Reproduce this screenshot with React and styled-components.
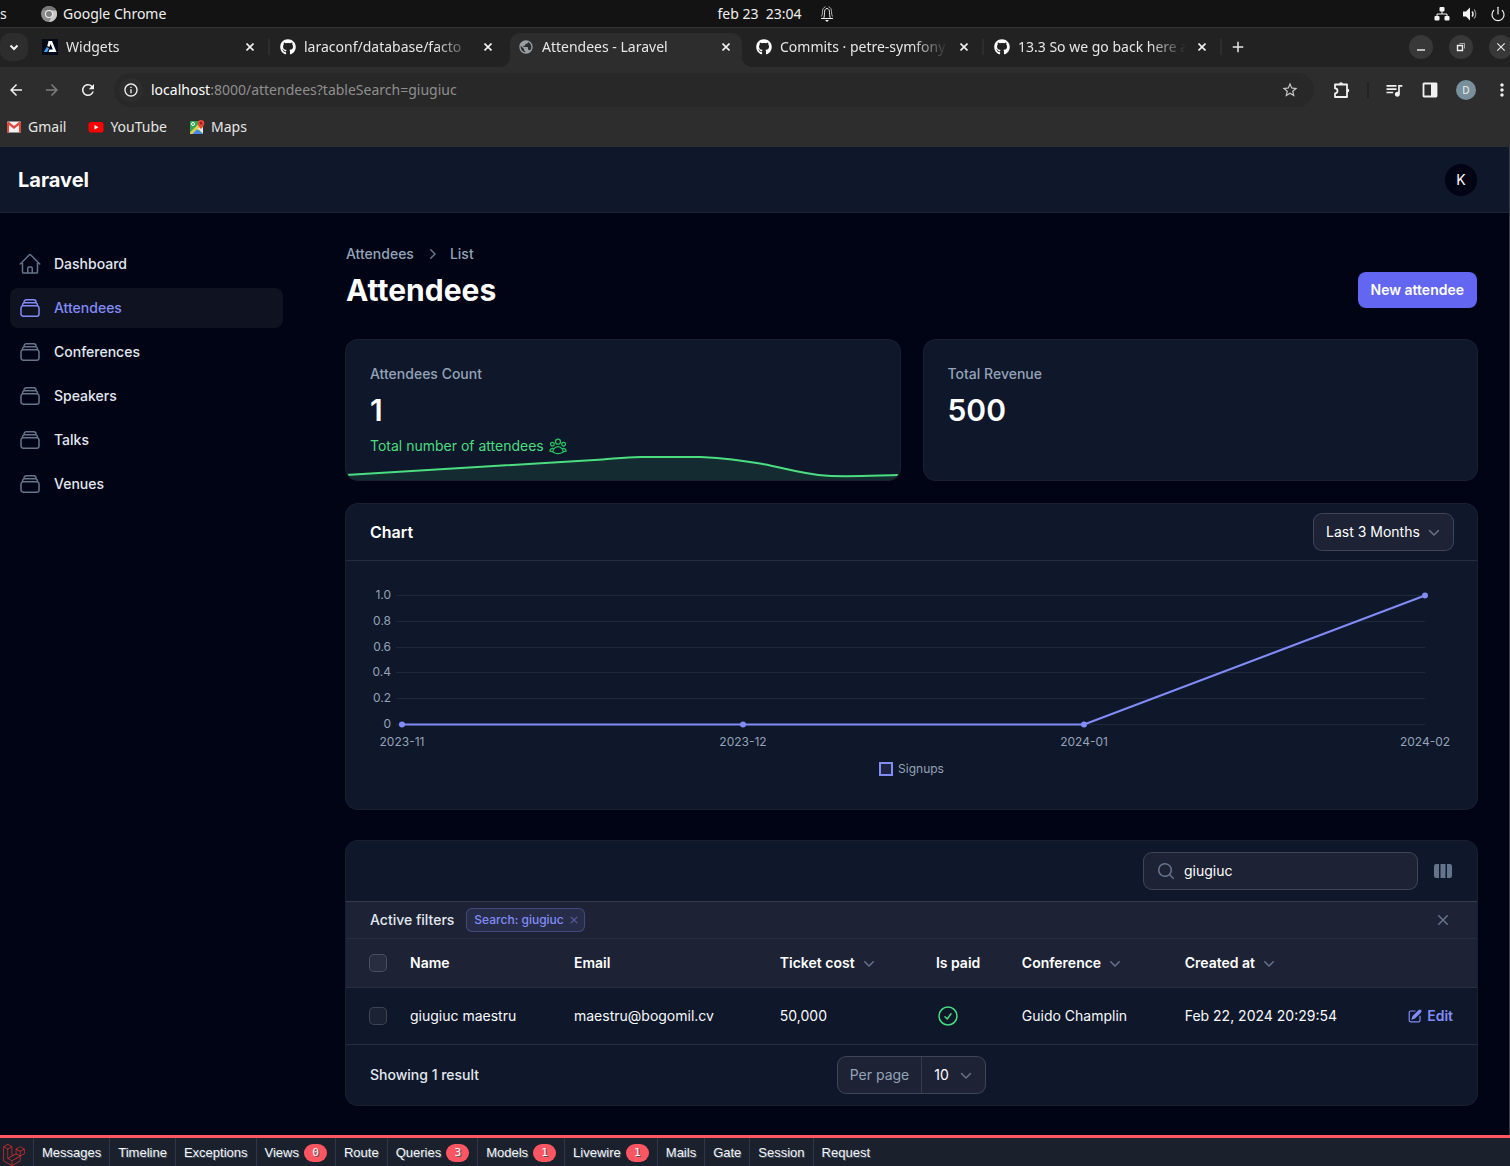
import React from "react";
import styled, { createGlobalStyle, css } from "styled-components";
import {
  HiOutlineHome,
  HiOutlineRectangleStack,
  HiOutlineUserGroup,
  HiOutlineCheckCircle,
  HiMiniChevronRight,
  HiMiniChevronDown,
  HiMiniXMark,
  HiMiniViewColumns,
  HiMiniPencilSquare,
  HiMiniMagnifyingGlass,
} from "react-icons/hi2";
import {
  MdArrowBack,
  MdArrowForward,
  MdRefresh,
  MdInfoOutline,
  MdStarBorder,
  MdQueueMusic,
  MdMoreVert,
  MdPublic,
  MdClose,
  MdAdd,
} from "react-icons/md";
import { FaGithub } from "react-icons/fa";
import { SiLaravel } from "react-icons/si";
import { Power } from "lucide-react";

const color = {
  page: "#010415",
  surface: "#0f172a",
  raised: "#1d2335",
  ring: "rgba(255, 255, 255, 0.11)",
  ringStrong: "rgba(255, 255, 255, 0.2)",
  text: "#e2e8f0",
  muted: "#94a3b8",
  icon: "#64748b",
  primary: "#818cf8",
  green: "#4ade80",
  chrome: "#2d2d2d",
  chromeDark: "#222222",
  chromeText: "#e6e6e6",
  debug: "#ff5661",
};

const uiFont = `"Inter", "Liberation Sans", sans-serif`;
const shellFont = `"Noto Sans", "Open Sans", sans-serif`;

const GlobalStyle = createGlobalStyle`
  *, *::before, *::after { box-sizing: border-box; }
  body {
    margin: 0;
    background: ${color.page};
    font-family: ${uiFont};
    font-size: 14px;
    line-height: 20px;
    color: ${color.text};
  }
  button, input, select { font: inherit; color: inherit; }
  button { border: 0; padding: 0; background: none; cursor: pointer; }
  a { color: inherit; text-decoration: none; }
  h1, h2, p, ul, ol { margin: 0; padding: 0; list-style: none; font-weight: inherit; }
  svg { display: block; flex-shrink: 0; }
`;

const Window = styled.div`
  min-height: 100vh;
  display: flex;
  flex-direction: column;
  overflow-x: hidden;
`;

/* ---------- desktop bar ---------- */

const DesktopBar = styled.div`
  height: 28px;
  display: grid;
  grid-template-columns: 717fr auto 676fr;
  align-items: center;
  background: #131313;
  border-bottom: 1px solid #343434;
  color: #f0f0f0;
  font-family: ${shellFont};
  font-size: 14px;
  overflow: hidden;
  white-space: pre;
`;

const DesktopGroup = styled.div`
  display: flex;
  align-items: center;
  gap: ${(p) => p.$gap}px;
  justify-content: ${(p) => (p.$end ? "flex-end" : "flex-start")};
  padding-right: ${(p) => (p.$end ? 4 : 0)}px;
`;

const CutLabel = styled.span`
  width: 35px;
`;

/* ---------- browser ---------- */

const TabStrip = styled.div`
  height: 39px;
  display: flex;
  align-items: flex-start;
  padding-top: 5px;
  background: ${color.chromeDark};
  color: ${color.chromeText};
  font-family: ${shellFont};
  font-size: 14px;
`;

const TabSearch = styled.button`
  width: 28px;
  height: 28px;
  margin-right: 6px;
  display: grid;
  place-items: center;
  border-radius: 10px;
  background: ${color.chrome};
  flex-shrink: 0;
`;

const Tab = styled.div`
  position: relative;
  flex: 0 1 232px;
  min-width: 60px;
  height: 34px;
  margin-right: 6px;
  padding: 0 8px 6px;
  display: flex;
  align-items: center;
  gap: 8px;
  border-radius: 10px 10px 0 0;
  ${(p) =>
    p.$active &&
    css`
      background: ${color.chrome};
      &::before,
      &::after {
        content: "";
        position: absolute;
        bottom: 0;
        width: 10px;
        height: 10px;
      }
      &::before {
        left: -10px;
        background: radial-gradient(circle at 0 0, transparent 10px, ${color.chrome} 10px);
      }
      &::after {
        right: -10px;
        background: radial-gradient(circle at 100% 0, transparent 10px, ${color.chrome} 10px);
      }
    `}
  ${(p) =>
    p.$divider &&
    css`
      &::after {
        content: "";
        position: absolute;
        right: -4px;
        top: 6px;
        width: 2px;
        height: 16px;
        background: ${color.chrome};
      }
    `}
`;

const TabTitle = styled.span`
  flex: 1;
  min-width: 0;
  overflow: hidden;
  white-space: nowrap;
  mask-image: linear-gradient(to right, #000 calc(100% - 36px), transparent);
`;

const TabClose = styled.button`
  width: 16px;
  height: 16px;
  display: grid;
  place-items: center;
  flex-shrink: 0;
`;

const NewTab = styled.button`
  width: 28px;
  height: 28px;
  display: grid;
  place-items: center;
`;

const WindowControls = styled.div`
  margin: 2px -3px 0 auto;
  display: flex;
  gap: 16px;
  flex-shrink: 0;
`;

const WindowControl = styled.button`
  width: 24px;
  height: 24px;
  border-radius: 50%;
  display: grid;
  place-items: center;
  background: #383838;
`;

const Toolbar = styled.div`
  height: 46px;
  display: flex;
  align-items: center;
  padding-left: 6px;
  background: ${color.chrome};
  color: #f1f1f1;
  font-family: ${shellFont};
  font-size: 14px;
`;

const ToolButton = styled.button`
  width: 20px;
  height: 20px;
  display: grid;
  place-items: center;
  flex-shrink: 0;
  color: ${(p) => (p.$dim ? "#7d7d7d" : "inherit")};
`;

const NavButtons = styled.div`
  display: flex;
  gap: 16px;
  margin-right: 16px;
`;

const AddressBar = styled.div`
  flex: 1;
  height: 34px;
  display: flex;
  align-items: center;
  gap: 8px;
  padding: 0 14px 0 5px;
  border-radius: 17px;
  background: #282828;
`;

const SiteInfo = styled.button`
  width: 24px;
  height: 24px;
  border-radius: 50%;
  display: grid;
  place-items: center;
  background: ${color.chrome};
`;

const Address = styled.div`
  flex: 1;
  color: #8f8f8f;
  white-space: nowrap;
  overflow: hidden;
  strong {
    font-weight: 400;
    color: #ffffff;
  }
`;

const ToolActions = styled.div`
  margin: 0 -2px 0 18px;
  display: flex;
  align-items: center;
  gap: 16px;
`;

const ToolDivider = styled.span`
  width: 2px;
  height: 16px;
  background: #232323;
  margin: 0 -1px;
`;

const Profile = styled.button`
  width: 20px;
  height: 20px;
  border-radius: 50%;
  background: #78909c;
  font-size: 10px;
  line-height: 20px;
`;

const Bookmarks = styled.nav`
  height: 34px;
  display: flex;
  gap: 22px;
  padding: 4px 6px 0;
  background: ${color.chrome};
  color: ${color.chromeText};
  font-family: ${shellFont};
  font-size: 14px;
  a {
    display: flex;
    align-items: center;
    gap: 6px;
    height: 20px;
  }
`;

/* ---------- application shell ---------- */

const Site = styled.div`
  flex: 1;
  display: flex;
  flex-direction: column;
  border-right: 1px solid #3a3c42;
`;

const Topbar = styled.header`
  height: 66px;
  display: flex;
  align-items: center;
  justify-content: space-between;
  padding: 0 32px 0 18px;
  background: ${color.surface};
  border-bottom: 1px solid #1d2433;
`;

const Brand = styled.a`
  font-size: 20px;
  font-weight: 700;
  color: #ffffff;
`;

const UserButton = styled.button`
  width: 32px;
  height: 32px;
  border-radius: 50%;
  background: ${color.page};
  color: #ffffff;
`;

const Body = styled.div`
  flex: 1;
  display: grid;
  grid-template-columns: 314px minmax(0, 1fr);
`;

const Sidebar = styled.nav`
  padding: 31px 31px 0 10px;
  ul {
    display: flex;
    flex-direction: column;
    gap: 4px;
  }
`;

const NavLink = styled.a`
  display: flex;
  align-items: center;
  gap: 12px;
  padding: 8px;
  border-radius: 8px;
  font-weight: 500;
  color: ${(p) => (p.$active ? color.primary : color.text)};
  background: ${(p) => (p.$active ? "#0f1221" : "transparent")};
  svg {
    width: 24px;
    height: 24px;
    color: ${(p) => (p.$active ? color.primary : color.icon)};
  }
`;

const Main = styled.main`
  padding: 31px 32px 30px;
`;

const Breadcrumbs = styled.ol`
  display: flex;
  align-items: center;
  gap: 8px;
  font-weight: 500;
  color: ${color.muted};
  svg {
    color: ${color.icon};
  }
  li {
    display: flex;
    gap: 8px;
  }
`;

const PageHeader = styled.div`
  display: flex;
  align-items: center;
  justify-content: space-between;
  margin: 8px 0 32px;
`;

const PageTitle = styled.h1`
  font-size: 30px;
  line-height: 36px;
  font-weight: 700;
  color: #ffffff;
`;

const PrimaryButton = styled.button`
  padding: 8px 13px;
  border-radius: 8px;
  background: #6366f1;
  color: #ffffff;
  font-weight: 600;
`;

const Card = styled.section`
  border-radius: 12px;
  background: ${color.surface};
  box-shadow: 0 0 0 1px ${color.ring};
`;

/* ---------- stats ---------- */

const Stats = styled.div`
  display: grid;
  grid-template-columns: 1fr 1fr;
  gap: 24px;
  margin-bottom: 24px;
`;

const StatCard = styled(Card)`
  position: relative;
  overflow: hidden;
  padding: 24px;
  display: flex;
  flex-direction: column;
  gap: 8px;
`;

const StatLabel = styled.p`
  font-weight: 500;
  color: ${color.muted};
`;

const StatValue = styled.p`
  font-size: 30px;
  line-height: 36px;
  font-weight: 600;
  color: #ffffff;
`;

const StatNote = styled.p`
  display: flex;
  align-items: center;
  gap: 4px;
  color: ${color.green};
  svg {
    color: #22c55e;
  }
`;

const Sparkline = styled.svg`
  position: absolute;
  inset: auto 0 0;
  width: 100%;
  height: 24px;
`;

/* ---------- chart ---------- */

const ChartCard = styled(Card)`
  margin-bottom: 32px;
`;

const ChartHeader = styled.div`
  display: flex;
  align-items: center;
  justify-content: space-between;
  padding: 10px 24px;
  border-bottom: 1px solid #262d3e;
  h2 {
    font-size: 16px;
    line-height: 24px;
    font-weight: 600;
    color: #ffffff;
  }
`;

const SelectWrap = styled.span`
  position: relative;
  display: inline-flex;
  border-radius: 8px;
  background: ${(p) => (p.$plain ? "transparent" : color.raised)};
  box-shadow: ${(p) => (p.$plain ? "none" : `0 0 0 1px ${color.ringStrong}`)};
  select {
    appearance: none;
    border: 0;
    height: 36px;
    padding: 0 ${(p) => (p.$plain ? 36 : 33)}px 0 12px;
    background: transparent;
    color: #ffffff;
    outline: none;
  }
  svg {
    position: absolute;
    right: 9px;
    top: 8px;
    pointer-events: none;
    color: #6b7280;
  }
`;

const ChartBody = styled.div`
  padding: 24px;
`;

const Plot = styled.svg`
  width: calc(100% - 60px);
  margin-left: 32px;
  height: 176px;
  overflow: visible;
  font-size: 12px;
  fill: ${color.muted};
`;

const Legend = styled.p`
  display: flex;
  align-items: center;
  justify-content: center;
  gap: 5px;
  margin-top: -2px;
  height: 26px;
  padding-bottom: 6px;
  font-size: 12px;
  color: ${color.muted};
  &::before {
    content: "";
    width: 14px;
    height: 14px;
    border: 2px solid ${color.primary};
    background: #1d2340;
  }
`;

/* ---------- table ---------- */

const TableTools = styled.div`
  display: flex;
  align-items: center;
  justify-content: flex-end;
  gap: 16px;
  padding: 12px 24px;
  color: ${color.icon};
`;

const SearchBox = styled.label`
  display: flex;
  align-items: center;
  gap: 8px;
  width: 273px;
  height: 36px;
  padding: 0 12px;
  border-radius: 8px;
  background: ${color.raised};
  box-shadow: 0 0 0 1px ${color.ringStrong};
  input {
    flex: 1;
    min-width: 0;
    border: 0;
    padding: 0;
    outline: none;
    background: transparent;
    color: #ffffff;
  }
`;

const FilterBar = styled.div`
  display: flex;
  align-items: center;
  gap: 12px;
  padding: 6px 24px;
  background: ${color.raised};
  border-top: 1px solid #333a4a;
  font-weight: 500;
  > button {
    margin-left: auto;
    color: ${color.icon};
  }
`;

const Chip = styled.span`
  display: inline-flex;
  align-items: center;
  gap: 3px;
  height: 24px;
  padding: 0 4px 0 8px;
  border-radius: 6px;
  font-size: 12px;
  color: ${color.primary};
  background: rgba(129, 140, 248, 0.1);
  box-shadow: inset 0 0 0 1px rgba(129, 140, 248, 0.3);
  button {
    color: #5860a8;
  }
`;

const Table = styled.table`
  width: 100%;
  table-layout: fixed;
  border-collapse: separate;
  border-spacing: 0;
  text-align: left;
  white-space: nowrap;
  th,
  td {
    padding: 0 12px;
    border-top: 1px solid #262d3e;
  }
  th {
    height: 49px;
    font-weight: 600;
    color: #ffffff;
    background: ${color.raised};
  }
  td {
    height: 57px;
    color: #f8fafc;
  }
  th:first-child,
  td:first-child {
    padding-left: 24px;
  }
  th:last-child,
  td:last-child {
    padding: 0 24px 0 0;
  }
  td > svg {
    color: ${color.green};
  }
`;

const SortButton = styled.button`
  display: flex;
  align-items: center;
  gap: 4px;
  svg {
    color: ${color.icon};
  }
`;

const Checkbox = styled.input.attrs({ type: "checkbox" })`
  appearance: none;
  display: block;
  width: 16px;
  height: 16px;
  margin: 0;
  border-radius: 4px;
  background: rgba(255, 255, 255, 0.05);
  box-shadow: 0 0 0 1px ${color.ringStrong};
`;

const EditLink = styled.a`
  display: flex;
  align-items: center;
  justify-content: flex-end;
  gap: 4px;
  font-weight: 600;
  color: ${color.primary};
`;

const TableFooter = styled.div`
  display: grid;
  grid-template-columns: 1fr auto 1fr;
  align-items: center;
  padding: 12px 24px;
  border-top: 1px solid #262d3e;
  font-weight: 500;
`;

const PerPage = styled.label`
  display: flex;
  border-radius: 8px;
  background: ${color.raised};
  box-shadow: 0 0 0 1px ${color.ringStrong};
  font-weight: 400;
`;

const PerPageLabel = styled.span`
  padding: 8px 12px;
  border-right: 1px solid #363c4c;
  color: ${color.muted};
`;

/* ---------- debug bar ---------- */

const DebugBar = styled.nav`
  height: 31px;
  display: flex;
  border-top: 3px solid ${color.debug};
  background: #1b212c;
  overflow: hidden;
  font-family: "Liberation Sans", Arial, sans-serif;
  font-size: 13px;
`;

const DebugLogo = styled.a`
  width: 34px;
  padding: 6px 0 0 3px;
  border-right: 1px solid #2d3748;
  color: #d9302c;
`;

const DebugTab = styled.a`
  display: flex;
  align-items: center;
  gap: 5px;
  padding: 2px 8px 0;
  color: #f4f6f8;
  text-shadow: 1px 1px 0 #4a5568;
  border-right: ${(p) => (p.$last ? "0" : "1px solid #2d3748")};
`;

const DebugBadge = styled.span`
  min-width: 23px;
  height: 18px;
  border-radius: 9px;
  background: ${color.debug};
  color: #ffffff;
  font-family: "DejaVu Sans Mono", monospace;
  font-size: 11px;
  line-height: 17px;
  text-align: center;
`;

/* ---------- drawings ---------- */

const ChromeMark = () => (
  <svg width="16" height="16" viewBox="0 0 16 16">
    <circle cx="8" cy="8" r="8" fill="#8c8c8c" />
    <path d="M8 4.5h7.2A8 8 0 0 1 8 16l3-6z" fill="#c9c9c9" />
    <path d="M1.2 4A8 8 0 0 1 15 4.200L8 4.500z" fill="#777777" />
    <circle cx="8" cy="8" r="4" fill="#f2f2f2" />
    <circle cx="8" cy="8" r="3" fill="#808080" />
  </svg>
);

const BellMark = () => (
  <svg width="14" height="16" viewBox="0 0 14 16" fill="none" stroke="#f0f0f0">
    <path d="M1 12.500h12" />
    <path d="M3.500 12.500C4.300 11 4.500 9 4.500 6.500 4.500 4 5.500 2.500 7 2.500s2.500 1.500 2.500 4c0 2.500 0.200 4.500 1 6" />
    <path d="M1.500 10.500C2.300 9 2.500 7.500 2.500 5.500 2.500 3 3.500 1.300 5.500 0.800M12.500 10.500c-0.800-1.500-1-3-1-5 0-2.500-1-4.200-3-4.700" opacity="0.7" />
    <path d="M5 14h4l-2 2z" fill="#f0f0f0" stroke="none" />
  </svg>
);

const NetworkMark = () => (
  <svg width="16" height="14" viewBox="0 0 16 14" fill="#f4f4f4">
    <rect x="5.500" y="0" width="5" height="4.500" rx="1" />
    <rect x="0.500" y="9" width="5" height="4.500" rx="1" />
    <rect x="10.500" y="9" width="5" height="4.500" rx="1" />
    <path d="M8 4v3M3 9.500V7h10v2.500" fill="none" stroke="#f4f4f4" />
  </svg>
);

const VolumeMark = () => (
  <svg width="16" height="16" viewBox="0 0 16 16">
    <path d="M1 5.500h3L8 1.500v13l-4-4H1z" fill="#f4f4f4" />
    <path d="M10 5.500a3.500 3.500 0 0 1 0 5" fill="none" stroke="#f4f4f4" strokeWidth="1.500" />
    <path d="M12 3.500a6.500 6.500 0 0 1 0 9" fill="none" stroke="#8a8a8a" strokeWidth="1.200" />
  </svg>
);

const FilamentMark = () => (
  <svg width="16" height="16" viewBox="0 0 16 16">
    <rect width="16" height="16" fill="#050a18" />
    <path d="M6.500 2h3.500l4.500 11H6.500l1-2.400h3.300L8.600 5 7.300 8 5.300 7z" fill="#ffffff" />
    <path d="M4.800 8l2.200 1.200L5.200 13H1.800z" fill="#3fa2f7" />
  </svg>
);

const CaretMark = () => (
  <svg width="12" height="12" viewBox="0 0 12 12" fill="none" stroke="#f1f1f1" strokeWidth="2">
    <path d="M2.500 4.500L6 8l3.500-3.500" />
  </svg>
);

const CrossMark = () => (
  <svg width="8" height="8" viewBox="0 0 8 8" stroke="#f1f1f1" strokeWidth="1.600">
    <path d="M0.500 0.500l7 7M7.500 0.500l-7 7" />
  </svg>
);

const ExtensionMark = () => (
  <svg width="18" height="18" viewBox="0 0 18 18" fill="none" stroke="#f1f1f1" strokeWidth="1.800" strokeLinejoin="round">
    <path d="M2 3.500h12v12.500H2v-3.700a2.500 2.500 0 0 0 0-5z" />
    <path d="M6 3.500a2 2.300 0 0 1 4 0zM14 7.500a2.300 2 0 0 1 0 4z" fill="#f1f1f1" stroke="none" />
  </svg>
);

const PanelMark = () => (
  <svg width="16" height="16" viewBox="0 0 16 16">
    <rect x="1.500" y="1.500" width="13" height="13" rx="0.500" fill="none" stroke="#f1f1f1" strokeWidth="1.800" />
    <path d="M9 1.500h5.500v13H9z" fill="#f1f1f1" />
  </svg>
);

const RestoreMark = () => (
  <svg width="10" height="10" viewBox="0 0 10 10" fill="none" stroke="#f1f1f1">
    <path d="M1.500 3.500h5v5h-5z" strokeWidth="1.400" />
    <path d="M3.500 1.500h5v5" opacity="0.6" />
  </svg>
);

const MinimizeMark = () => (
  <svg width="10" height="10" viewBox="0 0 10 10">
    <path d="M1 8h8" stroke="#f1f1f1" strokeWidth="1.400" />
  </svg>
);

const GmailMark = () => (
  <svg width="16" height="16" viewBox="0 0 16 16">
    <rect x="1" y="2.500" width="14" height="11" rx="1" fill="#f2f2f2" />
    <path d="M1 4v9.500h2V6l5 4 5-4v7.500h2V4a1.300 1.300 0 0 0-2-1L8 7 3 3a1.300 1.300 0 0 0-2 1z" fill="#e0483e" />
  </svg>
);

const YouTubeMark = () => (
  <svg width="16" height="16" viewBox="0 0 16 16">
    <rect x="0.500" y="3" width="15" height="10.500" rx="2.500" fill="#ff0000" />
    <path d="M6.500 6l4 2.250-4 2.250z" fill="#ffffff" />
  </svg>
);

const MapsMark = () => (
  <svg width="16" height="16" viewBox="0 0 16 16">
    <rect x="1" y="2" width="13" height="13" rx="1" fill="#34a853" />
    <path d="M1 13.500L11 3.500l3 0v3L6 15H1z" fill="#f4d04a" opacity="0.9" />
    <path d="M3.500 15l4.500-4.800L13.500 15z" fill="#4285f4" />
    <path d="M8.500 9.500l5.500 5.300V8z" fill="#e6e6e6" />
    <circle cx="4" cy="5" r="1.500" fill="none" stroke="#ffffff" />
    <path d="M12 1a3.300 3.300 0 0 0-3.300 3.300C8.700 6.800 12 10 12 10s3.300-3.200 3.300-5.700A3.300 3.300 0 0 0 12 1z" fill="#ea4335" />
    <circle cx="12" cy="4.300" r="1.200" fill="#8c1d18" />
  </svg>
);

const SelectCaret = () => (
  <svg width="20" height="20" viewBox="0 0 20 20" fill="none" stroke="currentColor" strokeWidth="1.500" strokeLinecap="round" strokeLinejoin="round">
    <path d="M5.500 8.500l4.500 4.500 4.500-4.500" />
  </svg>
);

/* ---------- data ---------- */

const tabs = [
  { title: "Widgets", icon: <FilamentMark />, divider: true },
  { title: "laraconf/database/facto", icon: <FaGithub size={16} color="#ffffff" /> },
  { title: "Attendees - Laravel", icon: <MdPublic size={16} color="#9aa0a6" />, active: true },
  { title: "Commits · petre-symfony", icon: <FaGithub size={16} color="#ffffff" />, divider: true },
  { title: "13.3 So we go back here a", icon: <FaGithub size={16} color="#ffffff" />, divider: true },
];

const navItems = ["Dashboard", "Attendees", "Conferences", "Speakers", "Talks", "Venues"];

const signups = [
  { month: "2023-11", value: 0 },
  { month: "2023-12", value: 0 },
  { month: "2024-01", value: 0 },
  { month: "2024-02", value: 1 },
];

const ticks = ["0", "0.2", "0.4", "0.6", "0.8", "1.0"];

const debugTabs = [
  ["Messages"],
  ["Timeline"],
  ["Exceptions"],
  ["Views", 0],
  ["Route"],
  ["Queries", 3],
  ["Models", 1],
  ["Livewire", 1],
  ["Mails"],
  ["Gate"],
  ["Session"],
  ["Request"],
];

/* ---------- sections ---------- */

function Desktop() {
  return (
    <DesktopBar>
      <DesktopGroup $gap={6}>
        <CutLabel>s</CutLabel>
        <ChromeMark />
        Google Chrome
      </DesktopGroup>
      <DesktopGroup $gap={18}>
        <span>{"feb 23  23:04"}</span>
        <BellMark />
      </DesktopGroup>
      <DesktopGroup $gap={12} $end>
        <NetworkMark />
        <VolumeMark />
        <Power size={16} strokeWidth={1.8} />
      </DesktopGroup>
    </DesktopBar>
  );
}

function Browser() {
  return (
    <>
      <TabStrip>
        <TabSearch aria-label="Search tabs">
          <CaretMark />
        </TabSearch>
        {tabs.map((tab) => (
          <Tab key={tab.title} $active={tab.active} $divider={tab.divider}>
            {tab.icon}
            <TabTitle>{tab.title}</TabTitle>
            <TabClose aria-label={`Close ${tab.title}`}>
              <CrossMark />
            </TabClose>
          </Tab>
        ))}
        <NewTab aria-label="New tab">
          <MdAdd size={18} />
        </NewTab>
        <WindowControls>
          <WindowControl aria-label="Minimize">
            <MinimizeMark />
          </WindowControl>
          <WindowControl aria-label="Restore">
            <RestoreMark />
          </WindowControl>
          <WindowControl aria-label="Close">
            <MdClose size={14} />
          </WindowControl>
        </WindowControls>
      </TabStrip>
      <Toolbar>
        <NavButtons>
          <ToolButton aria-label="Back">
            <MdArrowBack size={18} />
          </ToolButton>
          <ToolButton aria-label="Forward" $dim>
            <MdArrowForward size={18} />
          </ToolButton>
          <ToolButton aria-label="Reload">
            <MdRefresh size={18} />
          </ToolButton>
        </NavButtons>
        <AddressBar>
          <SiteInfo aria-label="Site information">
            <MdInfoOutline size={16} />
          </SiteInfo>
          <Address>
            <strong>localhost</strong>:8000/attendees?tableSearch=giugiuc
          </Address>
          <ToolButton aria-label="Bookmark this page">
            <MdStarBorder size={18} color="#c7c7c7" />
          </ToolButton>
        </AddressBar>
        <ToolActions>
          <ToolButton aria-label="Extensions">
            <ExtensionMark />
          </ToolButton>
          <ToolDivider />
          <ToolButton aria-label="Media">
            <MdQueueMusic size={20} />
          </ToolButton>
          <ToolButton aria-label="Side panel">
            <PanelMark />
          </ToolButton>
          <Profile aria-label="Profile">D</Profile>
          <ToolButton aria-label="Menu">
            <MdMoreVert size={20} />
          </ToolButton>
        </ToolActions>
      </Toolbar>
      <Bookmarks aria-label="Bookmarks">
        <a href="#gmail">
          <GmailMark />
          Gmail
        </a>
        <a href="#youtube">
          <YouTubeMark />
          YouTube
        </a>
        <a href="#maps">
          <MapsMark />
          Maps
        </a>
      </Bookmarks>
    </>
  );
}

function SignupsPlot() {
  const top = 11;
  const height = 129;
  const x = (i) => `${(i * 100) / (signups.length - 1)}%`;
  const y = (v) => top + height * (1 - v);
  return (
    <Plot role="img" aria-label="Signups per month">
      {ticks.map((tick, i) => {
        const ty = Math.round(y(i / 5)) - 0.5;
        return (
          <g key={tick}>
            <line x1="-6" x2="100%" y1={ty} y2={ty} stroke="#1f293b" />
            <text x="-11" y={Math.floor(ty) + 4} textAnchor="end">
              {tick}
            </text>
          </g>
        );
      })}
      {signups.slice(1).map((d, i) => (
        <line
          key={d.month}
          x1={x(i)}
          y1={y(signups[i].value) - 0.5}
          x2={x(i + 1)}
          y2={y(d.value) - 0.5}
          stroke={color.primary}
          strokeWidth="2"
        />
      ))}
      {signups.map((d, i) => (
        <g key={d.month}>
          <circle cx={x(i)} cy={y(d.value) - 0.5} r="3" fill={color.primary} />
          <text x={x(i)} y="161" textAnchor="middle">
            {d.month}
          </text>
        </g>
      ))}
    </Plot>
  );
}

function AttendeesTable() {
  return (
    <Card>
      <TableTools>
        <SearchBox>
          <HiMiniMagnifyingGlass size={20} />
          <input aria-label="Search" defaultValue="giugiuc" />
        </SearchBox>
        <button aria-label="Toggle columns">
          <HiMiniViewColumns size={20} />
        </button>
      </TableTools>
      <FilterBar>
        Active filters
        <Chip>
          Search: giugiuc
          <button aria-label="Remove search filter">
            <HiMiniXMark size={14} />
          </button>
        </Chip>
        <button aria-label="Remove all filters">
          <HiMiniXMark size={20} />
        </button>
      </FilterBar>
      <Table>
        <colgroup>
          <col width="52" />
          <col width="14.5%" />
          <col width="18.2%" />
          <col width="13.8%" />
          <col width="7.6%" />
          <col width="14.4%" />
          <col />
          <col width="80" />
        </colgroup>
        <thead>
          <tr>
            <th>
              <Checkbox aria-label="Select all" />
            </th>
            <th>Name</th>
            <th>Email</th>
            <th>
              <SortButton>
                Ticket cost
                <HiMiniChevronDown size={20} />
              </SortButton>
            </th>
            <th>Is paid</th>
            <th>
              <SortButton>
                Conference
                <HiMiniChevronDown size={20} />
              </SortButton>
            </th>
            <th>
              <SortButton>
                Created at
                <HiMiniChevronDown size={20} />
              </SortButton>
            </th>
            <th aria-label="Actions" />
          </tr>
        </thead>
        <tbody>
          <tr>
            <td>
              <Checkbox aria-label="Select giugiuc maestru" />
            </td>
            <td>giugiuc maestru</td>
            <td>maestru@bogomil.cv</td>
            <td>50,000</td>
            <td>
              <HiOutlineCheckCircle size={24} />
            </td>
            <td>Guido Champlin</td>
            <td>Feb 22, 2024 20:29:54</td>
            <td>
              <EditLink href="#edit">
                <HiMiniPencilSquare size={16} />
                Edit
              </EditLink>
            </td>
          </tr>
        </tbody>
      </Table>
      <TableFooter>
        <span>Showing 1 result</span>
        <PerPage>
          <PerPageLabel>Per page</PerPageLabel>
          <SelectWrap $plain>
            <select defaultValue="10">
              <option>10</option>
            </select>
            <SelectCaret />
          </SelectWrap>
        </PerPage>
      </TableFooter>
    </Card>
  );
}

export default function App() {
  return (
    <Window>
      <GlobalStyle />
      <Desktop />
      <Browser />
      <Site>
        <Topbar>
          <Brand href="#home">Laravel</Brand>
          <UserButton aria-label="User menu">K</UserButton>
        </Topbar>
        <Body>
          <Sidebar aria-label="Main">
            <ul>
              {navItems.map((item) => (
                <li key={item}>
                  <NavLink href={`#${item.toLowerCase()}`} $active={item === "Attendees"}>
                    {item === "Dashboard" ? <HiOutlineHome /> : <HiOutlineRectangleStack />}
                    {item}
                  </NavLink>
                </li>
              ))}
            </ul>
          </Sidebar>
          <Main>
            <Breadcrumbs>
              <li>
                <a href="#attendees">Attendees</a>
              </li>
              <li>
                <HiMiniChevronRight size={20} />
                List
              </li>
            </Breadcrumbs>
            <PageHeader>
              <PageTitle>Attendees</PageTitle>
              <PrimaryButton>New attendee</PrimaryButton>
            </PageHeader>
            <Stats>
              <StatCard>
                <StatLabel>Attendees Count</StatLabel>
                <StatValue>1</StatValue>
                <StatNote>
                  Total number of attendees
                  <HiOutlineUserGroup size={20} />
                </StatNote>
                <Sparkline viewBox="0 0 554 24" preserveAspectRatio="none">
                  <path
                    d="M0 19C83 14.500 166 8.500 257 3.500C270 2.500 280 1 295 1H355C390 3 400 5 417 8C440 12 455 18 482 19.800C505 21 530 19.500 554 19V24H0z"
                    fill="rgba(74, 222, 128, 0.1)"
                  />
                  <path
                    d="M0 19C83 14.500 166 8.500 257 3.500C270 2.500 280 1 295 1H355C390 3 400 5 417 8C440 12 455 18 482 19.800C505 21 530 19.500 554 19"
                    fill="none"
                    stroke={color.green}
                    strokeWidth="2"
                    vectorEffect="non-scaling-stroke"
                  />
                </Sparkline>
              </StatCard>
              <StatCard>
                <StatLabel>Total Revenue</StatLabel>
                <StatValue>500</StatValue>
              </StatCard>
            </Stats>
            <ChartCard>
              <ChartHeader>
                <h2>Chart</h2>
                <SelectWrap>
                  <select aria-label="Chart period" defaultValue="Last 3 Months">
                    <option>Last 3 Months</option>
                  </select>
                  <SelectCaret />
                </SelectWrap>
              </ChartHeader>
              <ChartBody>
                <SignupsPlot />
                <Legend>Signups</Legend>
              </ChartBody>
            </ChartCard>
            <AttendeesTable />
          </Main>
        </Body>
      </Site>
      <DebugBar aria-label="Debug bar">
        <DebugLogo href="#debug" aria-label="Debugbar">
          <SiLaravel size={22} />
        </DebugLogo>
        {debugTabs.map(([name, count], i) => (
          <DebugTab key={name} href={`#debug-${name.toLowerCase()}`} $last={i === debugTabs.length - 1}>
            {name}
            {count !== undefined && <DebugBadge>{count}</DebugBadge>}
          </DebugTab>
        ))}
      </DebugBar>
    </Window>
  );
}
